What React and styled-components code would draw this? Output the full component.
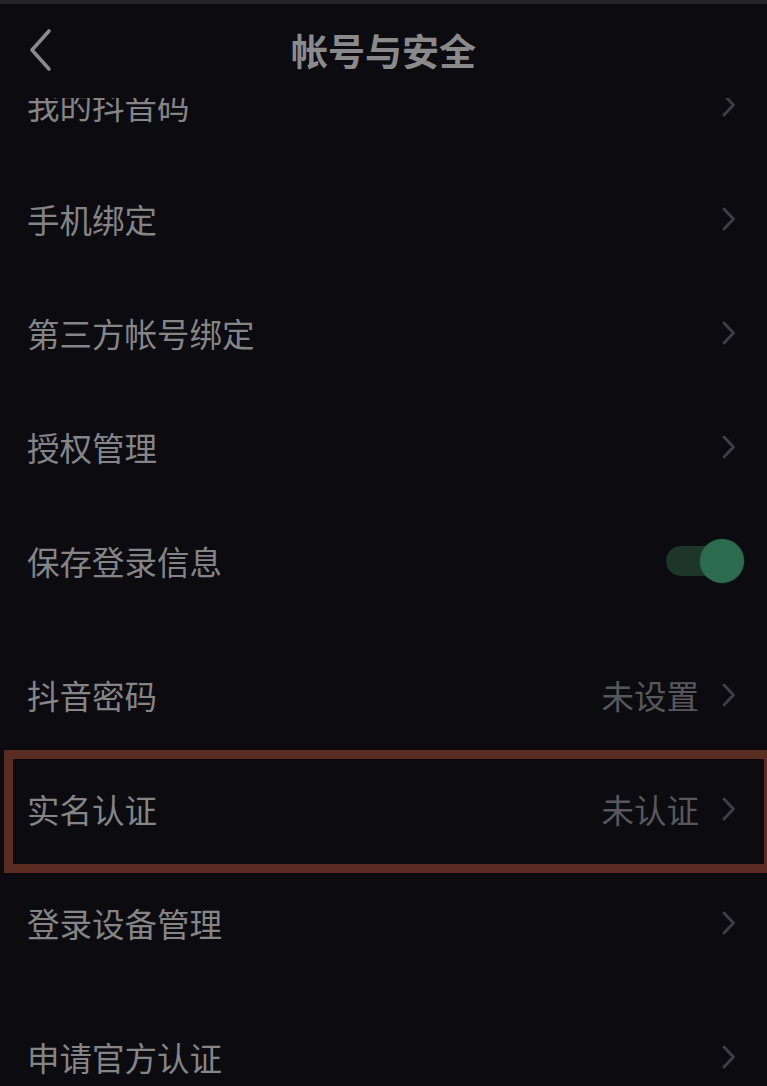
import React, { useState } from 'react';
import styled, { createGlobalStyle } from 'styled-components';

const GlobalStyle = createGlobalStyle`
  html, body {
    margin: 0;
    padding: 0;
    background: #0b0b10;
    overflow: hidden;
  }
  body {
    font-family: "Noto Sans CJK SC", "Noto Sans", sans-serif;
  }
`;

const groups = [
  [
    { label: '我的抖音码' },
    { label: '手机绑定' },
    { label: '第三方帐号绑定' },
    { label: '授权管理' },
    { label: '保存登录信息', toggle: true },
  ],
  [
    { label: '抖音密码', value: '未设置' },
    { label: '实名认证', value: '未认证', marked: true },
    { label: '登录设备管理' },
  ],
  [{ label: '申请官方认证' }],
];

export default function App() {
  const [saveLogin, setSaveLogin] = useState(true);

  return (
    <Page>
      <GlobalStyle />
      <StatusStrip />
      <Header>
        <BackButton aria-label="返回" onClick={() => window.history.back()}>
          <svg width="26" height="44" viewBox="0 0 26 44">
            <path d="M22 3 L5 22 L22 41" fill="none" stroke="#8a8a8c" strokeWidth="3.6" strokeLinecap="round" strokeLinejoin="round" />
          </svg>
        </BackButton>
        <Title>帐号与安全</Title>
      </Header>

      <List>
        {groups.map((group, gi) => (
          <Group key={gi}>
            {group.map((item) => (
              <Row key={item.label}>
                <Label>{item.label}</Label>
                <Right>
                  {item.value && <Value>{item.value}</Value>}
                  {item.toggle ? (
                    <Switch on={saveLogin} onClick={() => setSaveLogin(!saveLogin)}>
                      <Knob on={saveLogin} />
                    </Switch>
                  ) : (
                    <Chevron width="15" height="24" viewBox="0 0 15 24">
                      <path d="M3 2 L12.5 12 L3 22" fill="none" stroke="#3e3e44" strokeWidth="2.8" strokeLinecap="round" strokeLinejoin="round" />
                    </Chevron>
                  )}
                </Right>
                {item.marked && <Mark />}
              </Row>
            ))}
          </Group>
        ))}
      </List>
    </Page>
  );
}

const Page = styled.div`
  width: 767px;
  height: 1086px;
  background: #0b0b10;
  display: flex;
  flex-direction: column;
  overflow: hidden;
`;

const StatusStrip = styled.div`
  height: 4px;
  background: #25262c;
  flex-shrink: 0;
`;

const Header = styled.div`
  position: relative;
  z-index: 2;
  height: 94px;
  flex-shrink: 0;
  background: #0b0b10;
  display: flex;
  align-items: center;
  justify-content: center;
  padding-bottom: 2px;
  box-sizing: border-box;
`;

const BackButton = styled.button`
  position: absolute;
  left: 27px;
  top: 24px;
  padding: 0;
  border: none;
  background: none;
  display: flex;
  cursor: pointer;
`;

const Title = styled.h1`
  margin: 0;
  font-size: 37px;
  font-weight: 700;
  color: #8a8a8c;
  line-height: 1;
`;

const List = styled.div`
  margin-top: -50px;
  display: flex;
  flex-direction: column;
  gap: 20px;
`;

const Group = styled.div`
  display: flex;
  flex-direction: column;
`;

const Row = styled.div`
  position: relative;
  height: 114px;
  display: flex;
  align-items: center;
  justify-content: space-between;
  padding: 0 31px 0 27px;
`;

const Label = styled.span`
  font-size: 32.5px;
  line-height: 1;
  color: #858588;
`;

const Right = styled.div`
  display: flex;
  align-items: center;
  gap: 22px;
`;

const Value = styled.span`
  font-size: 32.5px;
  line-height: 1;
  color: #58585c;
`;

const Chevron = styled.svg`
  display: block;
`;

const Switch = styled.div`
  position: relative;
  width: 70px;
  height: 30px;
  border-radius: 15px;
  background: ${(p) => (p.on ? '#1d3629' : '#2a2a30')};
  cursor: pointer;
`;

const Knob = styled.div`
  position: absolute;
  top: -7px;
  ${(p) => (p.on ? 'right: -8px;' : 'left: -8px;')}
  width: 44px;
  height: 44px;
  border-radius: 50%;
  background: ${(p) => (p.on ? '#2d6b4e' : '#6a6a70')};
  box-shadow: 0 0 2px rgba(80, 150, 110, 0.4);
`;

const Mark = styled.div`
  position: absolute;
  top: -2px;
  bottom: -7px;
  left: 4px;
  right: -6px;
  border: 9px solid #5b2d22;
  pointer-events: none;
`;
